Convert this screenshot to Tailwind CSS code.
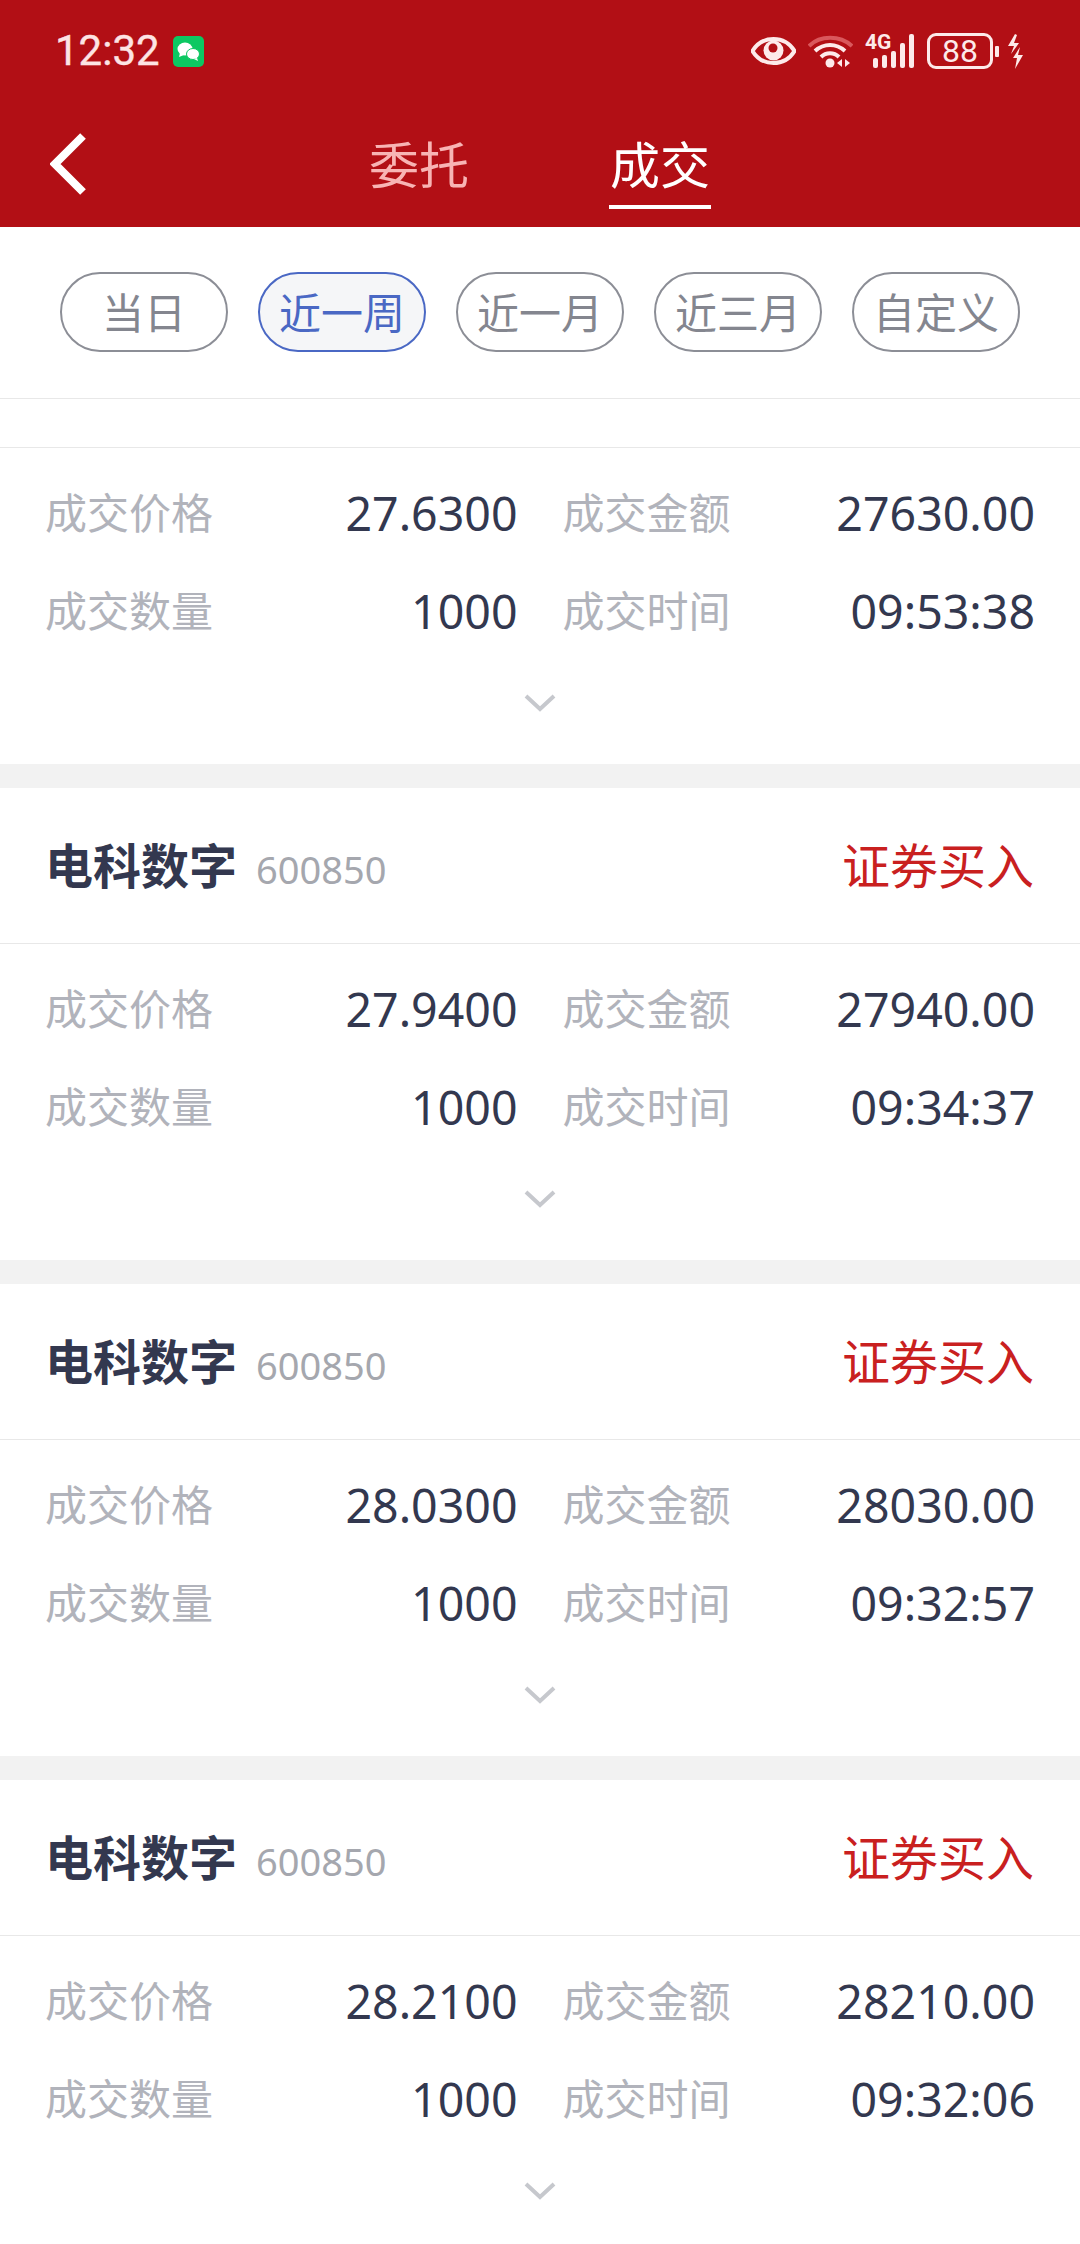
<!DOCTYPE html>
<html><head><meta charset="utf-8"><script src="https://cdn.jsdelivr.net/npm/@tailwindcss/browser@4"></script></head>
<body class="bg-[#f2f2f2] font-['Noto_Sans','Noto_Sans_CJK_SC',sans-serif]">
<div class="w-[1080px] h-[2244px] overflow-hidden flex flex-col">
<header class="bg-[#b20f15] h-[227px] shrink-0">
  <div class="h-[100px] flex items-center pl-[55px] pr-[57px] pt-[2px]">
    <span class="font-['Roboto'] text-[42px] leading-none text-[#fde4e4] [-webkit-text-stroke:0.4px_#fde4e4]">12:32</span>
    <svg class="ml-[13px]" width="31" height="31" viewBox="0 0 31 31"><rect width="31" height="31" rx="5" fill="#0cc862"/><ellipse cx="12" cy="13" rx="7.5" ry="6.500" fill="#fff"/><path d="M7 17l-1 4 5-2z" fill="#fff"/><ellipse cx="20" cy="18" rx="6.500" ry="5.500" fill="#fff" stroke="#0cc862"/><path d="M24 22l1 3-4-2z" fill="#fff"/></svg>
    <div class="ml-auto flex items-center">
      <svg width="45" height="28" viewBox="0 0 45 28"><path d="M1.500 14C7 5 14 2 22.500 2S38 5 43.500 14C38 23 31 26 22.500 26S7 23 1.500 14z" fill="none" stroke="#fdeaea" stroke-width="4"/><circle cx="22.500" cy="13.500" r="10" fill="#fdeaea"/><circle cx="22" cy="11" r="4.500" fill="#b20f15"/></svg>
      <svg class="ml-[12px]" width="45" height="34" viewBox="0 0 45 34"><path d="M1 12C12 1 32 1 44 12" fill="none" stroke="#d9585c" stroke-width="4"/><path d="M7 17C16 9 28 9 37 17" fill="none" stroke="#fdeaea" stroke-width="4"/><path d="M13 23C18 18 26 18 31 23" fill="none" stroke="#fdeaea" stroke-width="4"/><circle cx="22" cy="29" r="4.500" fill="#fdeaea"/><path d="M34 25v8l-5-4zM37 25v8l5-4z" fill="#fdeaea"/></svg>
      <div class="relative ml-[12px] w-[50px] h-[34px]">
        <span class="absolute left-0 -top-[1px] font-['Roboto'] font-bold text-[21px] leading-[18px] text-[#fdeaea]">4G</span>
        <svg class="absolute left-0 top-0" width="50" height="34" viewBox="0 0 50 34"><g fill="#fdeaea"><rect x="8" y="24" width="5" height="10" rx="2"/><rect x="17" y="21" width="5" height="13" rx="2"/><rect x="26" y="17" width="5" height="17" rx="2"/><rect x="35" y="9" width="5" height="25" rx="2"/><rect x="44" y="0" width="5" height="34" rx="2"/></g></svg>
      </div>
      <div class="ml-[12px] w-[66px] h-[36px] rounded-[9px] border-[3px] border-[#fdeaea] flex items-center justify-center font-['Roboto'] text-[32px] leading-none text-[#fdeaea]">88</div>
      <div class="ml-[2px] w-[4px] h-[11px] rounded-[1px] bg-[#fdeaea]"></div>
      <svg class="ml-[9px]" width="15" height="35" viewBox="0 0 15 35"><path d="M7 0L0 12h6L3 20l8-11H6l3-8zM12 13L5 24h4l-2 11 8-14h-5z" fill="#fdeaea"/></svg>
    </div>
  </div>
  <nav class="relative h-[127px]">
    <svg class="absolute left-[50px] top-[33px]" width="38" height="64" viewBox="0 0 38 64"><path d="M33 3L5 31l28 28" fill="none" stroke="#fff" stroke-width="8"/></svg>
    <div class="flex justify-center gap-[140px] pt-[33px]">
      <div class="text-[50px] leading-[64px] text-[#f8b4b4]">委托</div>
      <div class="flex flex-col items-center">
        <div class="text-[50px] leading-[64px] text-white">成交</div>
        <div class="w-[102px] h-[4px] bg-white mt-[8px]"></div>
      </div>
    </div>
  </nav>
</header>
<div class="bg-white h-[172px] shrink-0 border-b border-[#e8e8e8] flex justify-between items-start px-[60px] pt-[45px]">
  <div class="w-[168px] h-[80px] rounded-full border-2 border-[#8c8e96] flex items-center justify-center text-[42px] text-[#84868f]">当日</div>
  <div class="w-[168px] h-[80px] rounded-full border-2 border-[#4a68c4] bg-[#f5f6f8] flex items-center justify-center text-[42px] text-[#4a68c4]">近一周</div>
  <div class="w-[168px] h-[80px] rounded-full border-2 border-[#8c8e96] flex items-center justify-center text-[42px] text-[#84868f]">近一月</div>
  <div class="w-[168px] h-[80px] rounded-full border-2 border-[#8c8e96] flex items-center justify-center text-[42px] text-[#84868f]">近三月</div>
  <div class="w-[168px] h-[80px] rounded-full border-2 border-[#8c8e96] flex items-center justify-center text-[42px] text-[#84868f]">自定义</div>
</div>
<div class="bg-white h-[48px] shrink-0"></div>

<section class="bg-white border-t border-[#e8e8e8] h-[317px] shrink-0 px-[45px] pt-[31px]">
  <div class="grid grid-cols-2 gap-x-[45px] gap-y-[30px] text-[42px] leading-[68px]">
    <div class="flex justify-between"><span class="text-[#b1b3bb]">成交价格</span><span class="text-[46.500px] text-[#33384f]">27.6300</span></div>
    <div class="flex justify-between"><span class="text-[#b1b3bb]">成交金额</span><span class="text-[46.500px] text-[#33384f]">27630.00</span></div>
    <div class="flex justify-between"><span class="text-[#b1b3bb]">成交数量</span><span class="text-[46.500px] text-[#33384f]">1000</span></div>
    <div class="flex justify-between"><span class="text-[#b1b3bb]">成交时间</span><span class="text-[46.500px] text-[#33384f]">09:53:38</span></div>
  </div>
  <svg class="block mx-auto mt-[48px]" width="32" height="20" viewBox="0 0 32 20"><path d="M2 3l14 13L30 3" fill="none" stroke="#c6c8cd" stroke-width="4"/></svg>
</section>

<section class="bg-white mt-[24px] shrink-0">
  <div class="h-[155px] pl-[45px] pr-[46px] flex items-center justify-between">
    <div class="flex items-baseline"><span class="text-[48px] font-bold text-[#33384f]">电科数字</span><span class="ml-[19px] text-[38px] text-[#a5a7ae]">600850</span></div>
    <span class="text-[48px] text-[#c9201f]">证券买入</span>
  </div>
  <div class="border-t border-[#e8e8e8] h-[317px] px-[45px] pt-[31px]">
    <div class="grid grid-cols-2 gap-x-[45px] gap-y-[30px] text-[42px] leading-[68px]">
      <div class="flex justify-between"><span class="text-[#b1b3bb]">成交价格</span><span class="text-[46.500px] text-[#33384f]">27.9400</span></div>
      <div class="flex justify-between"><span class="text-[#b1b3bb]">成交金额</span><span class="text-[46.500px] text-[#33384f]">27940.00</span></div>
      <div class="flex justify-between"><span class="text-[#b1b3bb]">成交数量</span><span class="text-[46.500px] text-[#33384f]">1000</span></div>
      <div class="flex justify-between"><span class="text-[#b1b3bb]">成交时间</span><span class="text-[46.500px] text-[#33384f]">09:34:37</span></div>
    </div>
    <svg class="block mx-auto mt-[48px]" width="32" height="20" viewBox="0 0 32 20"><path d="M2 3l14 13L30 3" fill="none" stroke="#c6c8cd" stroke-width="4"/></svg>
  </div>
</section>

<section class="bg-white mt-[24px] shrink-0">
  <div class="h-[155px] pl-[45px] pr-[46px] flex items-center justify-between">
    <div class="flex items-baseline"><span class="text-[48px] font-bold text-[#33384f]">电科数字</span><span class="ml-[19px] text-[38px] text-[#a5a7ae]">600850</span></div>
    <span class="text-[48px] text-[#c9201f]">证券买入</span>
  </div>
  <div class="border-t border-[#e8e8e8] h-[317px] px-[45px] pt-[31px]">
    <div class="grid grid-cols-2 gap-x-[45px] gap-y-[30px] text-[42px] leading-[68px]">
      <div class="flex justify-between"><span class="text-[#b1b3bb]">成交价格</span><span class="text-[46.500px] text-[#33384f]">28.0300</span></div>
      <div class="flex justify-between"><span class="text-[#b1b3bb]">成交金额</span><span class="text-[46.500px] text-[#33384f]">28030.00</span></div>
      <div class="flex justify-between"><span class="text-[#b1b3bb]">成交数量</span><span class="text-[46.500px] text-[#33384f]">1000</span></div>
      <div class="flex justify-between"><span class="text-[#b1b3bb]">成交时间</span><span class="text-[46.500px] text-[#33384f]">09:32:57</span></div>
    </div>
    <svg class="block mx-auto mt-[48px]" width="32" height="20" viewBox="0 0 32 20"><path d="M2 3l14 13L30 3" fill="none" stroke="#c6c8cd" stroke-width="4"/></svg>
  </div>
</section>

<section class="bg-white mt-[24px] shrink-0">
  <div class="h-[155px] pl-[45px] pr-[46px] flex items-center justify-between">
    <div class="flex items-baseline"><span class="text-[48px] font-bold text-[#33384f]">电科数字</span><span class="ml-[19px] text-[38px] text-[#a5a7ae]">600850</span></div>
    <span class="text-[48px] text-[#c9201f]">证券买入</span>
  </div>
  <div class="border-t border-[#e8e8e8] h-[317px] px-[45px] pt-[31px]">
    <div class="grid grid-cols-2 gap-x-[45px] gap-y-[30px] text-[42px] leading-[68px]">
      <div class="flex justify-between"><span class="text-[#b1b3bb]">成交价格</span><span class="text-[46.500px] text-[#33384f]">28.2100</span></div>
      <div class="flex justify-between"><span class="text-[#b1b3bb]">成交金额</span><span class="text-[46.500px] text-[#33384f]">28210.00</span></div>
      <div class="flex justify-between"><span class="text-[#b1b3bb]">成交数量</span><span class="text-[46.500px] text-[#33384f]">1000</span></div>
      <div class="flex justify-between"><span class="text-[#b1b3bb]">成交时间</span><span class="text-[46.500px] text-[#33384f]">09:32:06</span></div>
    </div>
    <svg class="block mx-auto mt-[48px]" width="32" height="20" viewBox="0 0 32 20"><path d="M2 3l14 13L30 3" fill="none" stroke="#c6c8cd" stroke-width="4"/></svg>
  </div>
</section>
</div>
</body></html>
